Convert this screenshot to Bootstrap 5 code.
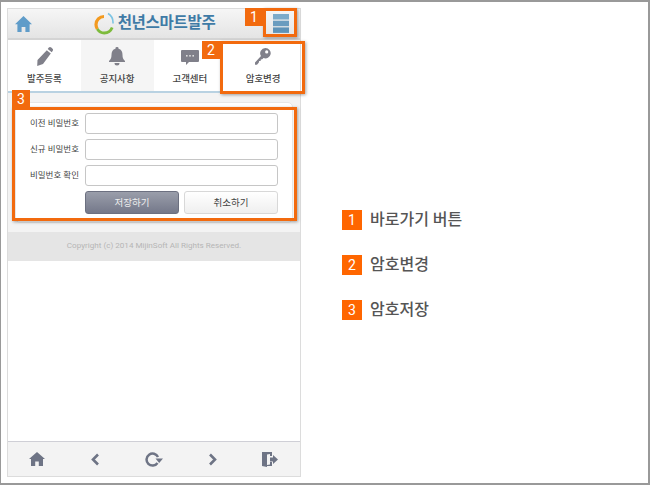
<!DOCTYPE html>
<html lang="ko">
<head>
<meta charset="utf-8">
<title>암호변경</title>
<link rel="stylesheet" href="https://cdn.jsdelivr.net/npm/bootstrap@5.3.0/dist/css/bootstrap.min.css">
<style>
html,body{margin:0;background:#fff;overflow:hidden}
body{font-family:"Roboto","Noto Sans CJK KR",sans-serif}
.frame{width:650px;height:485px;border:solid #999;border-width:2px 2px 2px 1px;position:relative;padding:6px 0 0 6px;display:flex;background:#fff}
.phone{width:294px;height:469px;border:1px solid #dcdcdc;display:flex;flex-direction:column;background:#fff}
.tophead{height:31px;background:linear-gradient(#f6f6f6,#e4e4e4);border-bottom:2px solid #d4d4d4;padding:0 11px 0 7px}
.logoset{margin-left:4px}
.brandname{font-size:15.5px;font-weight:700;color:#3f7ba6;letter-spacing:-.3px;line-height:1}
.tabbar{height:53px;border-bottom:2px solid #b9d2e2;background:#fff}
.tabitem{width:73px;display:flex;flex-direction:column;align-items:center;padding-top:7px;font-size:9.5px;color:#444;font-weight:500}
.tabitem.alt{background:#f5f5f5}
.tabitem svg{height:19px;margin-bottom:6px}
.tabitem.wide{width:74px}
.mainarea{height:139px;background:#f3f3f3;padding:9px 7px 0 7px}
.formbox{height:121px;background:#fff;border:1px solid #e6e6e6;border-radius:5px;padding:10px 14px 0 0}
.fieldrow{display:flex;align-items:center;height:21px;margin-bottom:5px}
.fieldlabel{width:63px;text-align:right;font-size:8.5px;color:#444;margin-right:6px;white-space:nowrap;flex:none}
.fieldinput{flex:1;height:21px;border:1px solid #c6c6c6;border-radius:3px;background:#fff;padding:0;min-width:0}
.btnrow{display:flex;gap:5px;padding-left:69px}
.savebtn,.cancelbtn{flex:1;height:23px;border-radius:3px;font-size:9.5px;padding:0;line-height:1}
.savebtn{background:linear-gradient(#9a9eaa,#74788a);border:1px solid #6c7080;color:#eee}
.cancelbtn{background:linear-gradient(#fff,#efefef);border:1px solid #d8d8d8;color:#444}
.copyrow{height:29px;background:#e5e5e5;color:#b5b5b5;font-size:8.1px;line-height:27px;text-align:center}
.filler{flex:1}
.bottombar{height:35px;background:#f3f3f3;border-top:1px solid #cfcfd6;padding:0 22px 0 21px}
.hl{position:absolute;border:3px solid #f26a0e;box-shadow:1px 1px 3px rgba(0,0,0,.35)}
.hl-one{left:262px;top:6px;width:34px;height:29px}
.hl-two{left:219px;top:39px;width:85px;height:53px}
.hl-three{left:11px;top:105px;width:285px;height:114px}
.num{position:absolute;background:#f26a0e;color:#fff;font-size:14px;line-height:18px;width:18px;height:18px;text-align:center}
.num-one{left:244px;top:6px}
.num-two{left:201px;top:39px}
.num-three{left:11px;top:88px}
.legend{position:absolute;left:341px;top:208px;display:flex;flex-direction:column;gap:25px}
.legendrow{display:flex;align-items:center;height:20px;gap:8px;font-size:16px;color:#555;font-weight:500}
.legendnum{width:20px;height:20px;background:#f60;color:#fff;font-size:14px;line-height:20px;text-align:center;font-weight:400}
</style>
</head>
<body>
<div class="frame">
  <div class="phone">
    <div class="tophead d-flex align-items-center justify-content-between">
      <svg width="17" height="16" viewBox="0 0 17 16"><path d="M8.500 0 17 8.300h-2.400V16h-4.200v-5H6.600v5H2.400V8.300H0z" fill="#5f9cc9"/></svg>
      <div class="logoset d-flex align-items-center gap-1">
        <svg width="20" height="23" viewBox="0 0 20 23"><path d="M10 4.500C5.500 4.500 2 8 2 12.500c0 1.700.5 3.200 1.300 4.500" fill="none" stroke="#f39a1f" stroke-width="3.200"/><path d="M3.300 17c1.600 2.500 4 4 6.900 4 3.600 0 6.700-2.200 8-5.500" fill="none" stroke="#7dbb3c" stroke-width="2.800"/><path d="M14 1.500c3.500 2 5.300 5.500 5 10" fill="none" stroke="#7cc4e4" stroke-width="1.600"/></svg>
        <span class="brandname">천년스마트발주</span>
      </div>
      <svg width="16" height="19" viewBox="0 0 16 19"><rect width="16" height="5.500" fill="#7cabca"/><rect width="16" height="5.500" y="6.700" fill="#6a9cbf"/><rect width="16" height="5.500" y="13.400" fill="#5f93b8"/></svg>
    </div>
    <div class="tabbar d-flex">
      <div class="tabitem">
        <svg width="17" height="19" viewBox="0 0 17 19"><path d="M12.600.8a2 2 0 0 1 2.700-.2l1 .8a2 2 0 0 1 .3 2.700l-.9 1.100-4-3.100zM10.800 3.300l4 3.100L7 17l-5.800 2L1.500 13z" fill="#80808a"/></svg>
        <span>발주등록</span>
      </div>
      <div class="tabitem alt">
        <svg width="16" height="19" viewBox="0 0 16 19"><path d="M8 0a1.500 1.500 0 0 1 1.500 1.800C12.500 2.500 13.500 5 13.500 8c0 3 .8 4.500 2.500 6v1H0v-1c1.700-1.500 2.500-3 2.500-6 0-3 1-5.500 4-6.200A1.500 1.500 0 0 1 8 0zM5.500 16h5a2.500 2.500 0 0 1-5 0z" fill="#80808a"/></svg>
        <span>공지사항</span>
      </div>
      <div class="tabitem">
        <svg width="18" height="19" viewBox="0 0 18 19"><path d="M1 3h16a1 1 0 0 1 1 1v10a1 1 0 0 1-1 1H8l-3 3v-3H1a1 1 0 0 1-1-1V4a1 1 0 0 1 1-1z" fill="#80808a"/><g fill="#ddd"><rect x="5" y="8" width="1.600" height="1.600"/><rect x="8.200" y="8" width="1.600" height="1.600"/><rect x="11.400" y="8" width="1.600" height="1.600"/></g></svg>
        <span>고객센터</span>
      </div>
      <div class="tabitem wide">
        <svg width="16" height="17" viewBox="0 0 16 17"><path fill-rule="evenodd" d="M10.500 0a5.200 5.200 0 1 1-2 10l-1.200 1.300-1.500.1-.2 1.500-1.500.2-.2 1.500L2 16.800l-2-.1v-2.200L6 8a5.200 5.200 0 0 1 4.500-8zm1.200 2.300a1.600 1.600 0 1 0 0 3.200 1.600 1.600 0 0 0 0-3.200z" fill="#80808a"/></svg>
        <span>암호변경</span>
      </div>
    </div>
    <div class="mainarea">
      <form class="formbox">
        <div class="fieldrow"><label class="fieldlabel">이전 비밀번호</label><input class="fieldinput" type="text"></div>
        <div class="fieldrow"><label class="fieldlabel">신규 비밀번호</label><input class="fieldinput" type="text"></div>
        <div class="fieldrow"><label class="fieldlabel">비밀번호 확인</label><input class="fieldinput" type="text"></div>
        <div class="btnrow">
          <button type="button" class="btn savebtn">저장하기</button>
          <button type="button" class="btn cancelbtn">취소하기</button>
        </div>
      </form>
    </div>
    <div class="copyrow">Copyright (c) 2014 MijinSoft All Rights Reserved.</div>
    <div class="filler"></div>
    <div class="bottombar d-flex align-items-center justify-content-between">
      <svg width="16" height="14" viewBox="0 0 16 14"><path d="M8 0l8 7h-2v7H9.800V9.500H6.200V14H2V7H0z" fill="#6e7485"/></svg>
      <svg width="10" height="13" viewBox="0 0 10 13"><path d="M8 1.500 3 6.500l5 5" fill="none" stroke="#6e7485" stroke-width="2.600"/></svg>
      <svg width="19" height="15" viewBox="0 0 19 15"><path d="M13.500 11A6 6 0 1 1 14 5" fill="none" stroke="#6e7485" stroke-width="2.500"/><path d="M11.500 6.500h7.500L15.200 11z" fill="#6e7485"/></svg>
      <svg width="10" height="13" viewBox="0 0 10 13"><path d="M2 1.500l5 5-5 5" fill="none" stroke="#6e7485" stroke-width="2.600"/></svg>
      <svg width="16" height="15" viewBox="0 0 16 15"><path d="M0 0h10v4H8V2L5 2.500v10.500l3-.5V10h2v4H5v1l-5-1z" fill="#6e7485"/><path d="M8 5.500h3V3l5 4.500-5 4.500V9.500H8z" fill="#6e7485"/></svg>
    </div>
  </div>
  <div class="hl hl-one"></div>
  <div class="num num-one">1</div>
  <div class="hl hl-two"></div>
  <div class="num num-two">2</div>
  <div class="hl hl-three"></div>
  <div class="num num-three">3</div>
  <div class="legend">
    <div class="legendrow"><span class="legendnum">1</span><span>바로가기 버튼</span></div>
    <div class="legendrow"><span class="legendnum">2</span><span>암호변경</span></div>
    <div class="legendrow"><span class="legendnum">3</span><span>암호저장</span></div>
  </div>
</div>
</body>
</html>
